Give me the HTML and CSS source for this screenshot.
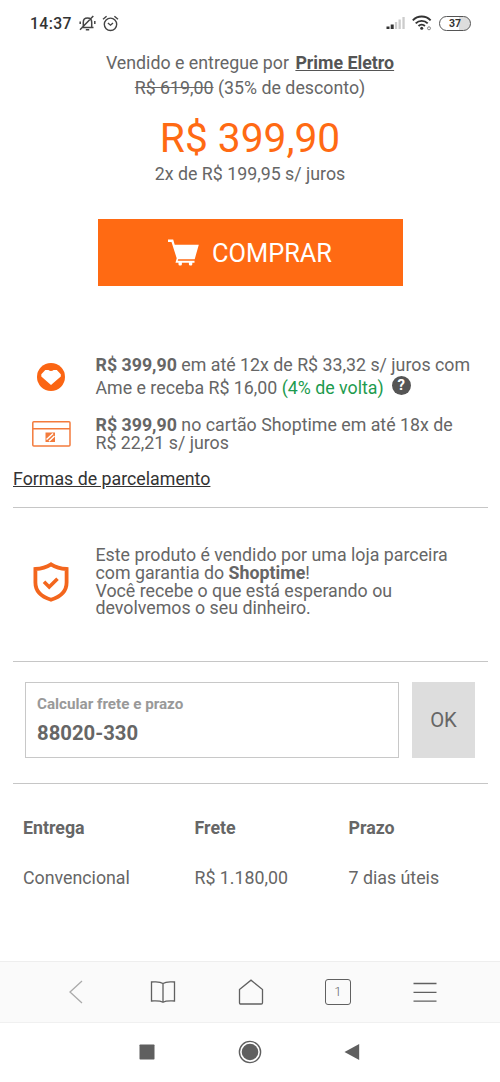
FILE: index.html
```
<!DOCTYPE html>
<html lang="pt-BR">
<head>
<meta charset="utf-8">
<title>Shoptime</title>
<link rel="stylesheet" href="styles.css">
</head>
<body>
<div class="phone">
  <header class="status">
    <span class="clock">14:37</span>
    <svg class="bell" width="17" height="17" viewBox="0 0 17 17" fill="none" stroke="#444" stroke-width="1.5">
      <path d="M2.500 12.500h12M4.300 12.500V7.200C4.300 4.600 6 3 8.500 3s4.200 1.600 4.200 4.200v5.300M6.800 14.800h3.400M1 14.800 14.300 1M1.200 6.500v2.500M15.800 6v3"/>
    </svg>
    <svg class="alarm" width="17" height="17" viewBox="0 0 17 17" fill="none" stroke="#444" stroke-width="1.4">
      <circle cx="8.500" cy="9.300" r="6.200"/><path d="M1 4.300 4.600 1.300M12.400 1.300 16 4.300M5.900 8l2.600 2.200L11 8"/>
    </svg>
    <svg class="signal" width="20" height="14" viewBox="0 0 20 14">
      <path fill="#333" d="M.5 10.500h3V13h-3zM4.700 8.500h3V13h-3z"/><path fill="#ccc" d="M8.900 6h2.300v7H8.900zM12.500 3.500h2.300V13h-2.300zM16.400 1h2.300v12h-2.300z"/>
    </svg>
    <svg class="wifi" width="20" height="16" viewBox="0 0 20 16" fill="none" stroke="#333" stroke-width="1.900">
      <path d="M.8 5.300C5.700.3 13.700.3 18.600 5.300M3.700 8.400c3.300-3.400 8.700-3.400 12 0M6.500 11c1.800-1.800 4.600-1.800 6.400 0"/><circle cx="9.700" cy="13.300" r="1.500" fill="#333" stroke="none"/><circle cx="17" cy="13.300" r="1.500" stroke="#888" stroke-width="1"/>
    </svg>
    <span class="battery">37</span>
  </header>

  <main>
    <section class="offer">
      <p class="seller">Vendido e entregue por <a class="store">Prime Eletro</a></p>
      <p class="discount"><s>R$ 619,00</s> (35% de desconto)</p>
      <p class="price">R$ 399,90</p>
      <p class="terms">2x de R$ 199,95 s/ juros</p>
      <button class="buy">
        <svg width="31" height="28" viewBox="0 0 31 28" fill="#fff">
          <path d="M0 .5h5.200l1.500 5.200h24.100l-4.100 14.500H10.200l-.5 1.600h16.800v1.900h-2.200v1.600q0 1.200-1.200 1.200h-1q-1.200 0-1.200-1.200v-1.600h-7v1.600q0 1.200-1.200 1.200h-1q-1.200 0-1.200-1.200v-1.600H7.500l1.200-4.500L3.500 3H0z"/>
        </svg>
        <span>COMPRAR</span>
      </button>
    </section>

    <section class="payments">
      <div class="payment ame">
        <svg width="28" height="28" viewBox="0 0 28 28">
          <circle cx="14" cy="14" r="14" fill="#fb6513"/><path d="M8.300 7h3.200q1 1 2.500 1T16.600 7h3.200l4 4.300v2.300L14 22 4.300 13.600v-2.300z" fill="#fff"/>
        </svg>
        <p><b>R$ 399,90</b> em até 12x de R$ 33,32 s/ juros com<br>Ame e receba R$ 16,00 <span class="cashback">(4% de volta)</span><span class="help">?</span></p>
      </div>
      <div class="payment card">
        <svg width="39" height="26" viewBox="0 0 39 26" fill="none" stroke="#f37b3c" stroke-width="1.500">
          <rect x=".8" y=".8" width="37.200" height="24.200" rx="1"/><path d="M1 7.800h37"/><path d="M13.500 11.500h9.500v9.500h-9.500z" fill="#f37b3c" stroke="none"/><path d="m14.500 18.500 6.500-6M17 20.300l5.500-5.300" stroke="#fff" stroke-width="1.500"/>
        </svg>
        <p><b>R$ 399,90</b> no cartão Shoptime em até 18x de<br>R$ 22,21 s/ juros</p>
      </div>
      <a class="methods">Formas de parcelamento</a>
    </section>

    <section class="guarantee">
      <svg width="36" height="40" viewBox="0 0 36 40" fill="none" stroke="#f3661d" stroke-width="3.800">
        <path d="M18 2.300C13.300 5.200 8 6.600 2.400 7v13.500C2.400 29.500 8.500 34.800 18 37.700c9.500-2.900 15.600-8.200 15.600-17.200V7C28 6.600 22.700 5.200 18 2.300z"/><path d="m11 19.800 5.200 5.200 8.300-8.300" stroke-width="3.600"/>
      </svg>
      <p>Este produto é vendido por uma loja parceira<br>com garantia do <b>Shoptime</b>!<br>Você recebe o que está esperando ou<br>devolvemos o seu dinheiro.</p>
    </section>

    <section class="shipping">
      <div class="zip"><span class="label">Calcular frete e prazo</span><span class="value">88020-330</span></div>
      <button class="ok">OK</button>
    </section>

    <section class="delivery">
      <b>Entrega</b><b>Frete</b><b>Prazo</b>
      <span>Convencional</span><span>R$ 1.180,00</span><span>7 dias úteis</span>
    </section>
  </main>

  <nav class="browser">
    <svg width="26" height="26" viewBox="0 0 26 26"><path class="back" d="M19 2 7 13l12 11"/></svg>
    <svg width="26" height="26" viewBox="0 0 26 26"><path d="M13 4.500C9.500 2 5 3 1.500 3v19c4 0 8-.7 11.500 1.300 3.500-2 7.500-1.300 11.500-1.300V3C21 3 16.500 2 13 4.500zV23"/></svg>
    <svg width="26" height="26" viewBox="0 0 26 26"><path d="M1.500 10.500 13 1.200l11.500 9.300v13.200q0 1.300-1.300 1.300H2.800q-1.300 0-1.300-1.300z"/></svg>
    <span class="tabs">1</span>
    <svg width="26" height="26" viewBox="0 0 26 26"><path d="M1.500 4.500h23M1.500 13.300h23M1.500 22.200h23"/></svg>
  </nav>
  <nav class="system">
    <svg width="24" height="24" viewBox="0 0 24 24"><rect x="4.500" y="4.500" width="15" height="15" rx=".7"/></svg>
    <svg width="24" height="24" viewBox="0 0 24 24"><circle cx="12" cy="12" r="10.600" fill="none" stroke="#5f5f5f" stroke-width="1.400"/><circle cx="12" cy="12" r="8.300"/></svg>
    <svg width="24" height="24" viewBox="0 0 24 24"><path d="M4.500 12 19.200 4v16z"/></svg>
  </nav>
</div>
</body>
</html>
```

FILE: styles.css
```
* { box-sizing: border-box; }
body { margin: 0; background: #fff; color: #666; font-family: Roboto, sans-serif; font-size: 17.8px; }
p { margin: 0; white-space: nowrap; }
b { font-weight: 700; }
svg { display: block; flex: none; }
button { border: 0; padding: 0; font-family: inherit; color: inherit; }
.phone { width: 500px; height: 1082px; display: flex; flex-direction: column; overflow: hidden; }

.status { height: 46px; padding: 0 29px 0 30px; display: flex; align-items: center; }
.clock { color: #333; font-size: 15.700px; font-weight: 500; letter-spacing: .4px; width: 49px; }
.alarm { margin-left: 6px; }
.signal { margin-left: auto; }
.wifi { margin: 0 7px 0 6px; }
.battery { width: 32px; height: 15px; border: 1.5px solid #555; border-radius: 8px; color: #333; background: linear-gradient(90deg, #fff 64%, #ddd 64%); font-size: 10.5px; font-weight: 700; line-height: 13px; text-align: center; }

main { height: 915px; }
.offer { height: 301px; display: flex; flex-direction: column; align-items: center; padding-top: 4px; }
.seller, .discount { line-height: 25px; }
.store { color: #555; font-weight: 700; text-decoration: underline; margin-left: 2px; }
.price { color: #ff6a13; font-size: 40.700px; line-height: 46px; margin-top: 15px; }
.terms { line-height: 22px; margin-top: 2px; }
.buy { width: 305px; height: 67px; margin-top: 34px; background: #ff6a13; color: #fff; display: flex; align-items: center; justify-content: center; gap: 13px; font-size: 25.400px; }

.payments { height: 161px; margin: 0 12px 0 13px; border-bottom: 1px solid #c6c6c6; }
.payment { display: grid; grid-template-columns: 76px 1fr; justify-items: center; align-items: center; }
.payment p { justify-self: start; padding-left: 6.500px; }
.ame { height: 59px; line-height: 23px; }
.ame p { margin-top: -1px; }
.card { height: 56px; line-height: 17.800px; }
.cashback { color: #1d9b4e; }
.help { display: inline-block; width: 19px; height: 19px; margin-left: 8px; border-radius: 50%; background: #555; color: #fff; font-size: 15px; font-weight: 700; line-height: 19px; text-align: center; position: relative; top: -4px; }
.methods { display: block; color: #333; text-decoration: underline; line-height: 22px; margin-top: 6px; }

.guarantee { height: 154px; margin: 0 12px 0 13px; padding-top: 38px; display: grid; grid-template-columns: 76px 1fr; justify-items: center; align-items: start; border-bottom: 1.500px solid #c6c6c6; line-height: 17.800px; }
.guarantee svg { margin-top: 16px; }
.guarantee p { justify-self: start; padding-left: 6.500px; }

.shipping { height: 122px; margin: 0 12px 0 13px; padding: 20px 13px 0 12px; display: flex; justify-content: space-between; border-bottom: 1px solid #c6c6c6; }
.zip { width: 374px; height: 76px; border: 1.500px solid #c8c8c8; padding: 10px 11px; display: flex; flex-direction: column; }
.label { color: #999; font-size: 15.200px; font-weight: 700; line-height: 22px; }
.value { font-size: 20.300px; font-weight: 700; line-height: 36px; }
.ok { width: 63px; height: 76px; background: #ddd; font-size: 20.300px; }

.delivery { display: grid; grid-template-columns: 171.500px 154px 1fr; grid-auto-rows: 50px; align-items: center; padding: 18px 23px 0; }

.browser { height: 62px; background: #fafafa; border-top: 1px solid #eee; border-bottom: 1px solid #f0f0f0; padding: 0 62px 0 63px; display: flex; align-items: center; justify-content: space-between; }
.browser svg { fill: none; stroke: #606060; stroke-width: 1.300; }
.browser .back { stroke: #aaa; }
.tabs { width: 26px; height: 26px; border: 1.500px solid #606060; border-radius: 3px; font-size: 13px; font-weight: 300; line-height: 23px; text-align: center; }
.system { height: 58px; padding: 0 136px 0 135px; display: flex; align-items: center; justify-content: space-between; }
.system svg { fill: #5f5f5f; }
```
